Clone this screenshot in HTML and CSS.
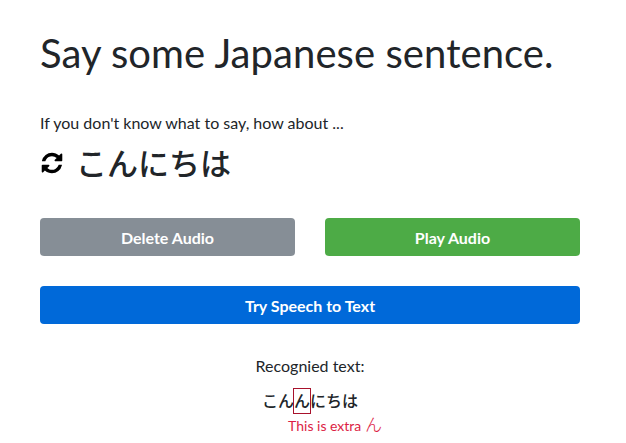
FILE: index.html
```html
<!DOCTYPE html>
<html lang="en">
<head>
    <meta charset="UTF-8">
    <title>Say some Japanese sentence</title>
    <link rel="stylesheet" href="styles.css">
</head>
<body>
    <div class="container">
        <h1>Say some Japanese sentence.</h1>
        <p class="hint">If you don't know what to say, how about ...</p>
        <div class="suggestion">
            <svg class="refresh" viewBox="0 0 1792 1792"><path d="M1639 1056q0 5-1 7-64 268-268 434.5t-478 166.5q-146 0-282.5-55t-243.5-157l-129 129q-19 19-45 19t-45-19-19-45v-448q0-26 19-45t45-19h448q26 0 45 19t19 45-19 45l-137 137q71 66 161 102t187 36q134 0 250-65t186-179q11-17 53-117 8-23 30-23h192q13 0 22.5 9.5t9.5 22.5zm25-800v448q0 26-19 45t-45 19h-448q-26 0-45-19t-19-45 19-45l138-138q-148-137-349-137-134 0-250 65t-186 179q-11 17-53 117-8 23-30 23h-199q-13 0-22.5-9.5t-9.5-22.5v-7q65-268 270-434.5t480-166.5q146 0 284 55.5t245 156.5l130-129q19-19 45-19t45 19 19 45z"/></svg>
            <span>こんにちは</span>
        </div>
        <div class="btn-row">
            <button class="btn btn-grey">Delete Audio</button>
            <button class="btn btn-green">Play Audio</button>
        </div>
        <button class="btn btn-blue">Try Speech to Text</button>
        <div class="result">
            <p class="result-label">Recognied text:</p>
            <p class="result-text">こん<span class="extra">ん</span>にちは</p>
            <p class="extra-note">This is extra <span class="extra-char">ん</span></p>
        </div>
    </div>
</body>
</html>
```

FILE: styles.css
```css
* {
    margin: 0;
    padding: 0;
    box-sizing: border-box;
}

body {
    font-family: Lato, "Noto Sans CJK JP", sans-serif;
    color: #212529;
    background-color: #fff;
    font-size: 16px;
    line-height: 1.5;
}

.container {
    width: 540px;
    margin-left: 40px;
    padding-top: 29px;
}

h1 {
    font-size: 40px;
    font-weight: 400;
    line-height: 1.2;
    letter-spacing: 0.07px;
    margin-bottom: 34px;
}

.hint {
    margin-bottom: 4px;
}

.suggestion {
    display: flex;
    align-items: center;
    gap: 12px;
    font-size: 31px;
    font-weight: 500;
    line-height: 48px;
    margin-bottom: 31px;
}

.refresh {
    width: 24px;
    height: 24px;
    fill: #000;
}

.btn-row {
    display: flex;
    gap: 30px;
    margin-bottom: 30px;
}

.btn {
    display: block;
    width: 100%;
    height: 38px;
    border: none;
    border-radius: 4px;
    color: #fff;
    font-family: inherit;
    font-size: 16px;
    font-weight: 700;
}

.btn-grey {
    background-color: #868e96;
}

.btn-green {
    background-color: #4dab46;
}

.btn-blue {
    background-color: #0069d9;
}

.result {
    margin-top: 30px;
    text-align: center;
}

.result-label {
    margin-bottom: 10px;
}

.result-text {
    font-weight: 500;
    line-height: 24px;
}

.extra {
    display: inline-block;
    border: 1px solid #a8122c;
    margin: 0 -1px;
}

.extra-note {
    margin-left: 50px;
    color: #dc1e45;
    font-family: "Liberation Sans Narrow", Lato, "Noto Sans CJK JP", sans-serif;
    font-size: 14px;
    line-height: 20px;
}

.extra-char {
    font-family: "Noto Sans CJK JP", sans-serif;
    font-size: 17px;
    font-weight: 300;
}
```
